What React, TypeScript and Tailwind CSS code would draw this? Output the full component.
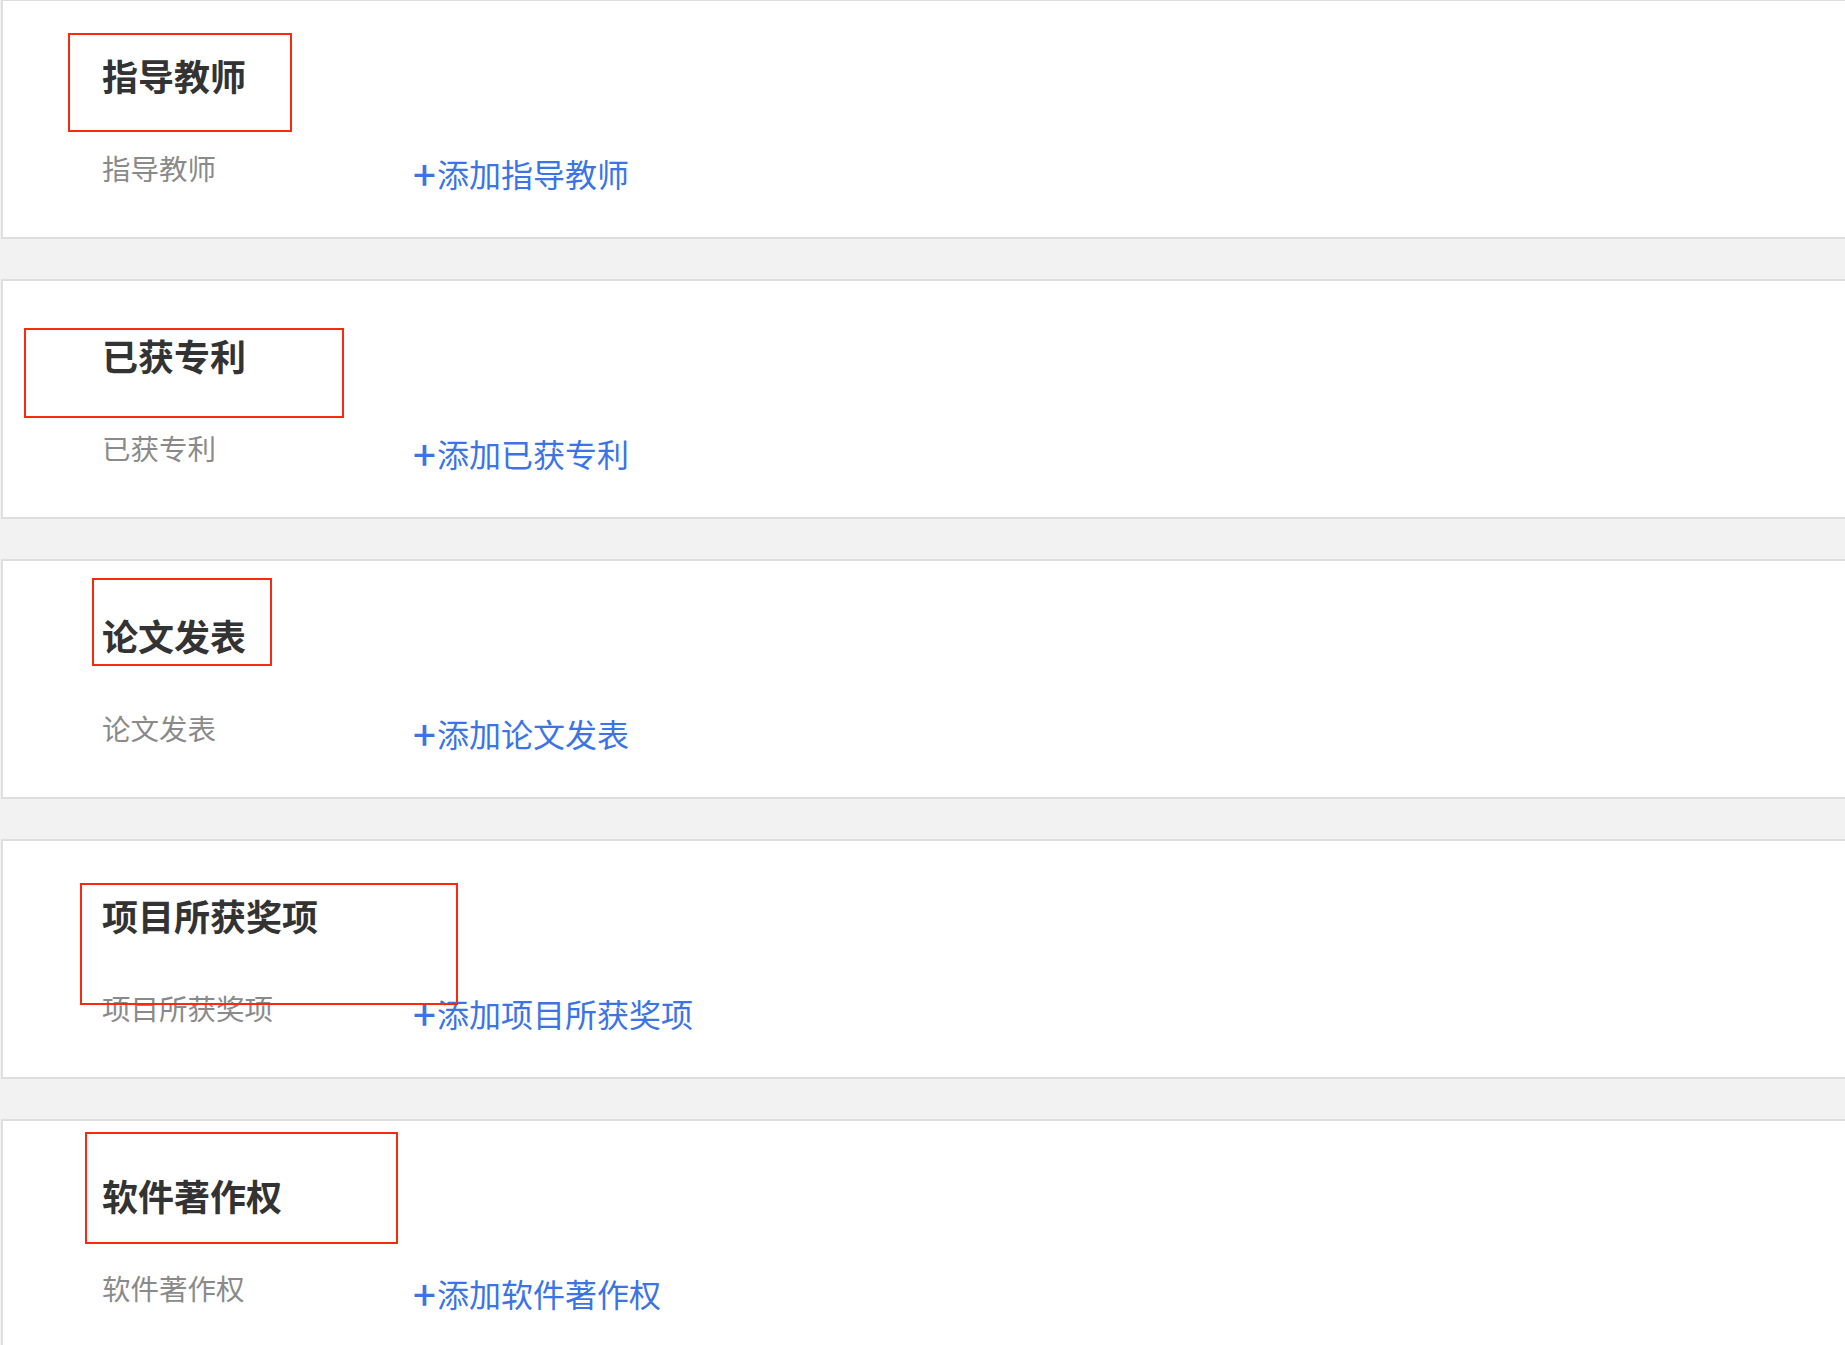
import React from "react";

type Section = {
    title: string;
    mark: { left: number; top: number; width: number; height: number };
};

const sections: Section[] = [
    { title: "指导教师", mark: { left: 67, top: 34, width: 224, height: 99 } },
    { title: "已获专利", mark: { left: 23, top: 49, width: 320, height: 90 } },
    { title: "论文发表", mark: { left: 91, top: 19, width: 180, height: 88 } },
    { title: "项目所获奖项", mark: { left: 79, top: 44, width: 378, height: 122 } },
    { title: "软件著作权", mark: { left: 84, top: 13, width: 313, height: 112 } },
];

const font = { fontFamily: '"Noto Sans CJK SC", "Noto Sans", sans-serif' };

const SectionCard = ({ section }: { section: Section }) => {
    const { mark } = section;
    return (
        <section className="relative h-[240px] bg-white border-y-2 border-l-2 border-[#dedede] pl-[99px] pt-[56px]">
            <h2 className="text-[36px] leading-none font-bold text-[#333333]">{section.title}</h2>
            <div className="mt-[61px] flex items-start">
                <span className="w-[310px] text-[28.5px] leading-none text-[#8a8a8a]">{section.title}</span>
                <a href="#" className="mt-[3px] flex items-center h-[32px] text-[32px] leading-none text-[#3b74e6]">
                    <span className="inline-block w-[25px] h-[32px] leading-[32px] pl-[1px] text-[40px] font-medium">+</span>
                    添加{section.title}
                </a>
            </div>
            {/* annotation box drawn over the screenshot */}
            <div
                className="absolute border-[2.5px] border-[#fa2a10] pointer-events-none"
                style={{ left: mark.left - 2, top: mark.top - 2, width: mark.width, height: mark.height }}
            />
        </section>
    );
};

export default function App() {
    return (
        <div className="min-h-screen bg-[#f2f2f2] mt-[-1px] pl-px flex flex-col gap-[40px] overflow-hidden" style={font}>
            {sections.map((section) => (
                <SectionCard key={section.title} section={section} />
            ))}
        </div>
    );
}
